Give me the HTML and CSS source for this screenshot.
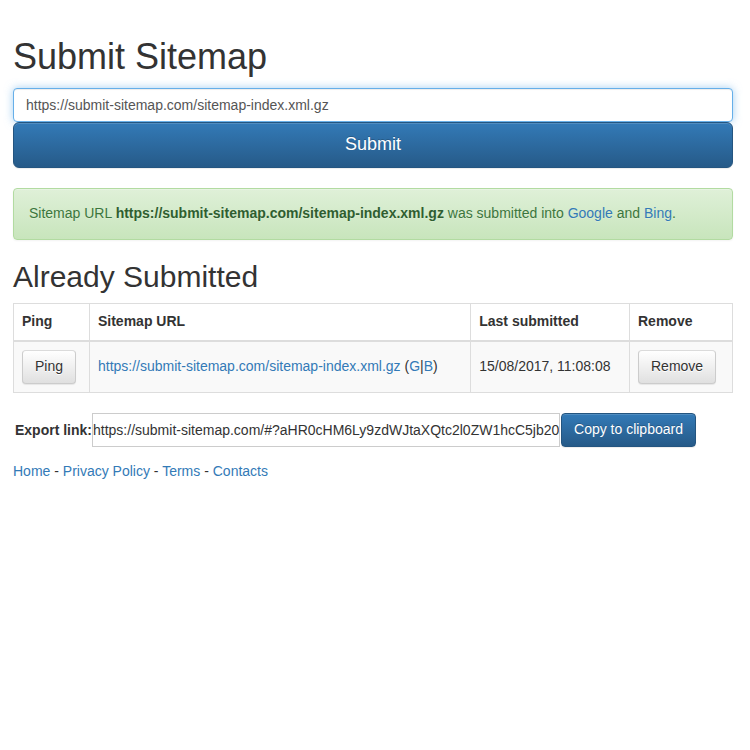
FILE: index.html
```html
<!DOCTYPE html>
<html>
<head>
<meta charset="utf-8">
<link rel="stylesheet" href="styles.css">
</head>
<body>
<div class="container">
  <h1 class="title">Submit Sitemap</h1>
  <form class="submit-form">
    <input class="url-input" type="text" value="https://submit-sitemap.com/sitemap-index.xml.gz">
    <button class="btn btn-primary btn-lg" type="button">Submit</button>
  </form>
  <div class="alert">Sitemap URL <b>https://submit-sitemap.com/sitemap-index.xml.gz</b> was submitted into <a href="#">Google</a> and <a href="#">Bing</a>.</div>
  <h2 class="subtitle">Already Submitted</h2>
  <table class="table">
    <thead>
      <tr>
        <th class="c-ping">Ping</th>
        <th class="c-url">Sitemap URL</th>
        <th class="c-last">Last submitted</th>
        <th class="c-remove">Remove</th>
      </tr>
    </thead>
    <tbody>
      <tr>
        <td><button class="btn btn-default" type="button">Ping</button></td>
        <td><a href="#">https://submit-sitemap.com/sitemap-index.xml.gz</a> (<a href="#">G</a>|<a href="#">B</a>)</td>
        <td>15/08/2017, 11:08:08</td>
        <td><button class="btn btn-default" type="button">Remove</button></td>
      </tr>
    </tbody>
  </table>
  <div class="export">
    <label class="export-label">Export link:</label>
    <input class="export-input" type="text" value="https://submit-sitemap.com/#?aHR0cHM6Ly9zdWJtaXQtc2l0ZW1hcC5jb20vc2l0ZW1hcC1pbmRleC54bWwuZ3o=">
    <button class="btn btn-primary" type="button">Copy to clipboard</button>
  </div>
  <p class="footer"><a href="#">Home</a> - <a href="#">Privacy Policy</a> - <a href="#">Terms</a> - <a href="#">Contacts</a></p>
</div>
</body>
</html>
```
FILE: styles.css
```css
* { box-sizing: border-box; }
html, body { margin: 0; padding: 0; background: #fff; }
body {
  font-family: "Liberation Sans", Arial, sans-serif;
  font-size: 14px;
  line-height: 1.42857;
  color: #333;
}
a { color: #337ab7; text-decoration: none; }
.container {
  width: 720px;
  margin-left: 13px;
  padding-top: 17px;
}
.title {
  font-size: 36px;
  font-weight: 500;
  line-height: 1.1;
  margin: 20px 0 11px;
}
.subtitle {
  font-size: 30px;
  font-weight: 500;
  line-height: 1.1;
  margin: 20px 0 10px;
}
.submit-form { margin: 0; display: flex; flex-direction: column; }
.url-input {
  display: block;
  width: 100%;
  height: 34px;
  padding: 6px 12px;
  font: inherit;
  font-size: 14px;
  color: #555;
  background: #fff;
  border: 1px solid #66afe9;
  border-radius: 4px;
  outline: 0;
  box-shadow: inset 0 1px 1px rgba(0,0,0,.075), 0 0 8px rgba(102,175,233,.6);
}
.btn {
  display: inline-block;
  font-family: inherit;
  font-size: 14px;
  line-height: 1.42857;
  padding: 6px 12px;
  border: 1px solid transparent;
  border-radius: 4px;
  cursor: pointer;
  white-space: nowrap;
}
.btn-primary {
  color: #fff;
  background-image: linear-gradient(to bottom, #337ab7 0, #265a88 100%);
  border-color: #245580;
  text-shadow: 0 -1px 0 rgba(0,0,0,.2);
  box-shadow: inset 0 1px 0 rgba(255,255,255,.15), 0 1px 1px rgba(0,0,0,.075);
}
.btn-default {
  color: #333;
  background-image: linear-gradient(to bottom, #fff 0, #e0e0e0 100%);
  border-color: #dbdbdb #ccc #ccc;
  border-style: solid;
  text-shadow: 0 1px 0 #fff;
  box-shadow: inset 0 1px 0 rgba(255,255,255,.15), 0 1px 1px rgba(0,0,0,.075);
}
.btn-lg {
  display: block;
  width: 100%;
  padding: 10px 16px;
  font-size: 18px;
  line-height: 1.3333;
  border-radius: 6px;
}
.alert {
  margin: 20px 0 20px;
  padding: 15px;
  border: 1px solid #b2dba1;
  border-radius: 4px;
  color: #3c763d;
  background-image: linear-gradient(to bottom, #dff0d8 0, #c8e5bc 100%);
  text-shadow: 0 1px 0 rgba(255,255,255,.2);
  box-shadow: inset 0 1px 0 rgba(255,255,255,.25), 0 1px 2px rgba(0,0,0,.05);
}
.alert b { color: #2f5e30; }
.table {
  width: 100%;
  border-collapse: collapse;
  border-spacing: 0;
  margin-bottom: 20px;
  border: 1px solid #ddd;
}
.table th, .table td {
  border: 1px solid #ddd;
  padding: 8px;
  text-align: left;
  vertical-align: middle;
  line-height: 1.42857;
}
.table th {
  font-weight: bold;
  border-bottom-width: 2px;
  vertical-align: bottom;
}
.table tbody tr { background: #f9f9f9; }
.c-ping { width: 76px; }
.c-url { width: 382px; }
.c-last { width: 159px; }
.c-remove { width: 103px; }
.export {
  display: flex;
  align-items: center;
  margin-top: 20px;
  padding-left: 2px;
}
.export-label {
  font-weight: bold;
  margin-right: 0;
  padding-top: 2px;
}
.export-input {
  width: 468px;
  height: 34px;
  padding: 0;
  font: inherit;
  font-size: 14px;
  color: #333;
  border: 1px solid #ccc;
  border-radius: 0;
  outline: 0;
  margin-right: 1px;
}
.footer { margin: 15px 0 0; }
```
